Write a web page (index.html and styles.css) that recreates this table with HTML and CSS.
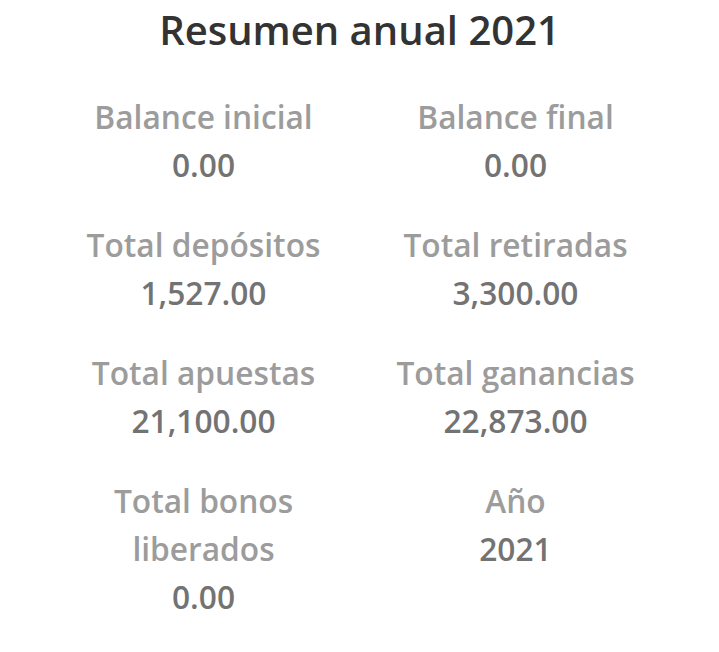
FILE: index.html
```html
<!DOCTYPE html>
<html lang="es">
<head>
<meta charset="utf-8">
<link rel="stylesheet" href="styles.css">
</head>
<body>
<main class="summary">
  <h1 class="title">Resumen anual 2021</h1>
  <div class="grid">
    <div class="cell"><div class="label">Balance inicial</div><div class="value">0.00</div></div>
    <div class="cell"><div class="label">Balance final</div><div class="value">0.00</div></div>
    <div class="cell"><div class="label">Total depósitos</div><div class="value">1,527.00</div></div>
    <div class="cell"><div class="label">Total retiradas</div><div class="value">3,300.00</div></div>
    <div class="cell"><div class="label">Total apuestas</div><div class="value">21,100.00</div></div>
    <div class="cell"><div class="label">Total ganancias</div><div class="value">22,873.00</div></div>
    <div class="cell"><div class="label narrow">Total bonos liberados</div><div class="value">0.00</div></div>
    <div class="cell"><div class="label">Año</div><div class="value">2021</div></div>
  </div>
</main>
</body>
</html>
```
FILE: styles.css
```css
html, body {
  margin: 0;
  padding: 0;
  background: #ffffff;
}
body {
  font-family: "Open Sans", "Liberation Sans", sans-serif;
  width: 719px;
  height: 652px;
  overflow: hidden;
}
.summary {
  display: flex;
  flex-direction: column;
  align-items: center;
}
.title {
  margin: 0;
  font-size: 40px;
  font-weight: 600;
  color: #333333;
  line-height: 60px;
}
.grid {
  display: grid;
  grid-template-columns: 312px 312px;
  row-gap: 32px;
  margin-top: 33px;
}
.cell {
  display: flex;
  flex-direction: column;
  align-items: center;
  text-align: center;
  font-size: 31.7px;
  font-weight: 600;
  line-height: 48px;
}
.label {
  color: #9c9c9c;
}
.label.narrow {
  width: 240px;
}
.value {
  color: #737373;
}
```
